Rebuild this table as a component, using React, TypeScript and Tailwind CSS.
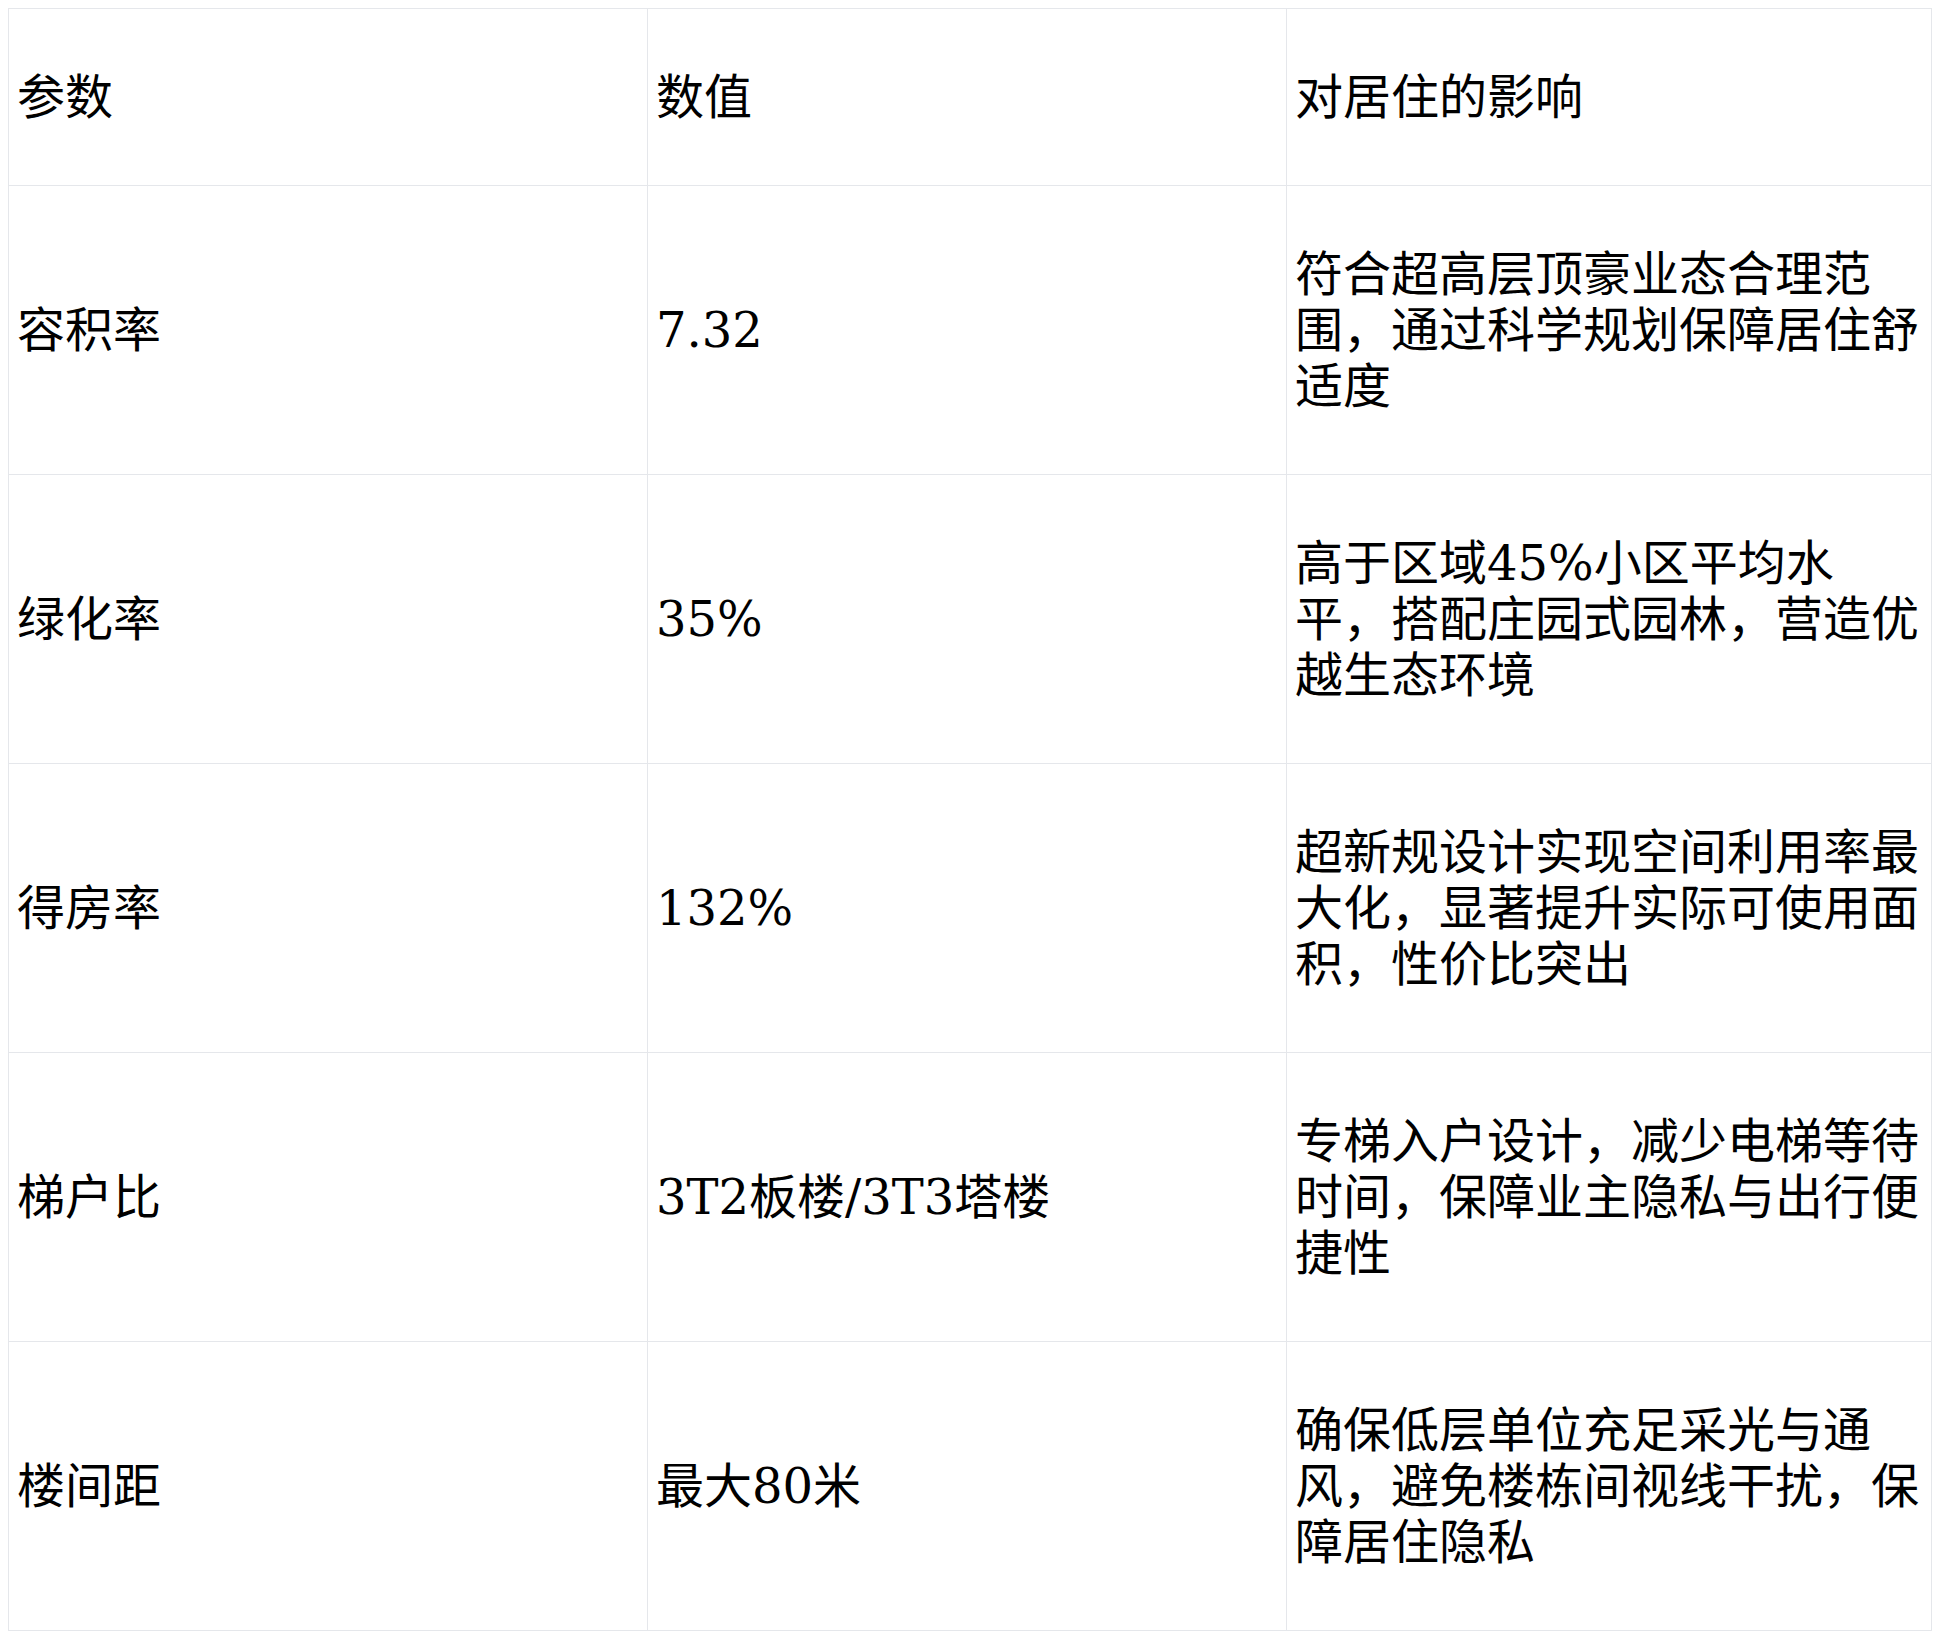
const rows = [
  { param: '容积率', value: '7.32', effect: '符合超高层顶豪业态合理范围，通过科学规划保障居住舒适度' },
  { param: '绿化率', value: '35%', effect: '高于区域45%小区平均水平，搭配庄园式园林，营造优越生态环境' },
  { param: '得房率', value: '132%', effect: '超新规设计实现空间利用率最大化，显著提升实际可使用面积，性价比突出' },
  { param: '梯户比', value: '3T2板楼/3T3塔楼', effect: '专梯入户设计，减少电梯等待时间，保障业主隐私与出行便捷性' },
  { param: '楼间距', value: '最大80米', effect: '确保低层单位充足采光与通风，避免楼栋间视线干扰，保障居住隐私' },
];

const cell = 'border border-[#e5e7eb] px-2 py-[60px] align-middle text-left font-normal';

export default function App() {
  return (
    <div className="min-h-screen bg-white p-2">
      <table
        className="w-full table-fixed border-collapse text-[48px] leading-[56px] text-black"
        style={{ fontFamily: '"DejaVu Serif", "Noto Sans CJK SC", serif' }}
      >
        <colgroup>
          <col className="w-[639px]" />
          <col className="w-[639px]" />
          <col />
        </colgroup>
        <thead>
          <tr>
            <th className={cell}>参数</th>
            <th className={cell}>数值</th>
            <th className={cell}>对居住的影响</th>
          </tr>
        </thead>
        <tbody>
          {rows.map((r) => (
            <tr key={r.param}>
              <td className={cell}>{r.param}</td>
              <td className={cell}>{r.value}</td>
              <td className={cell}>{r.effect}</td>
            </tr>
          ))}
        </tbody>
      </table>
    </div>
  );
}
